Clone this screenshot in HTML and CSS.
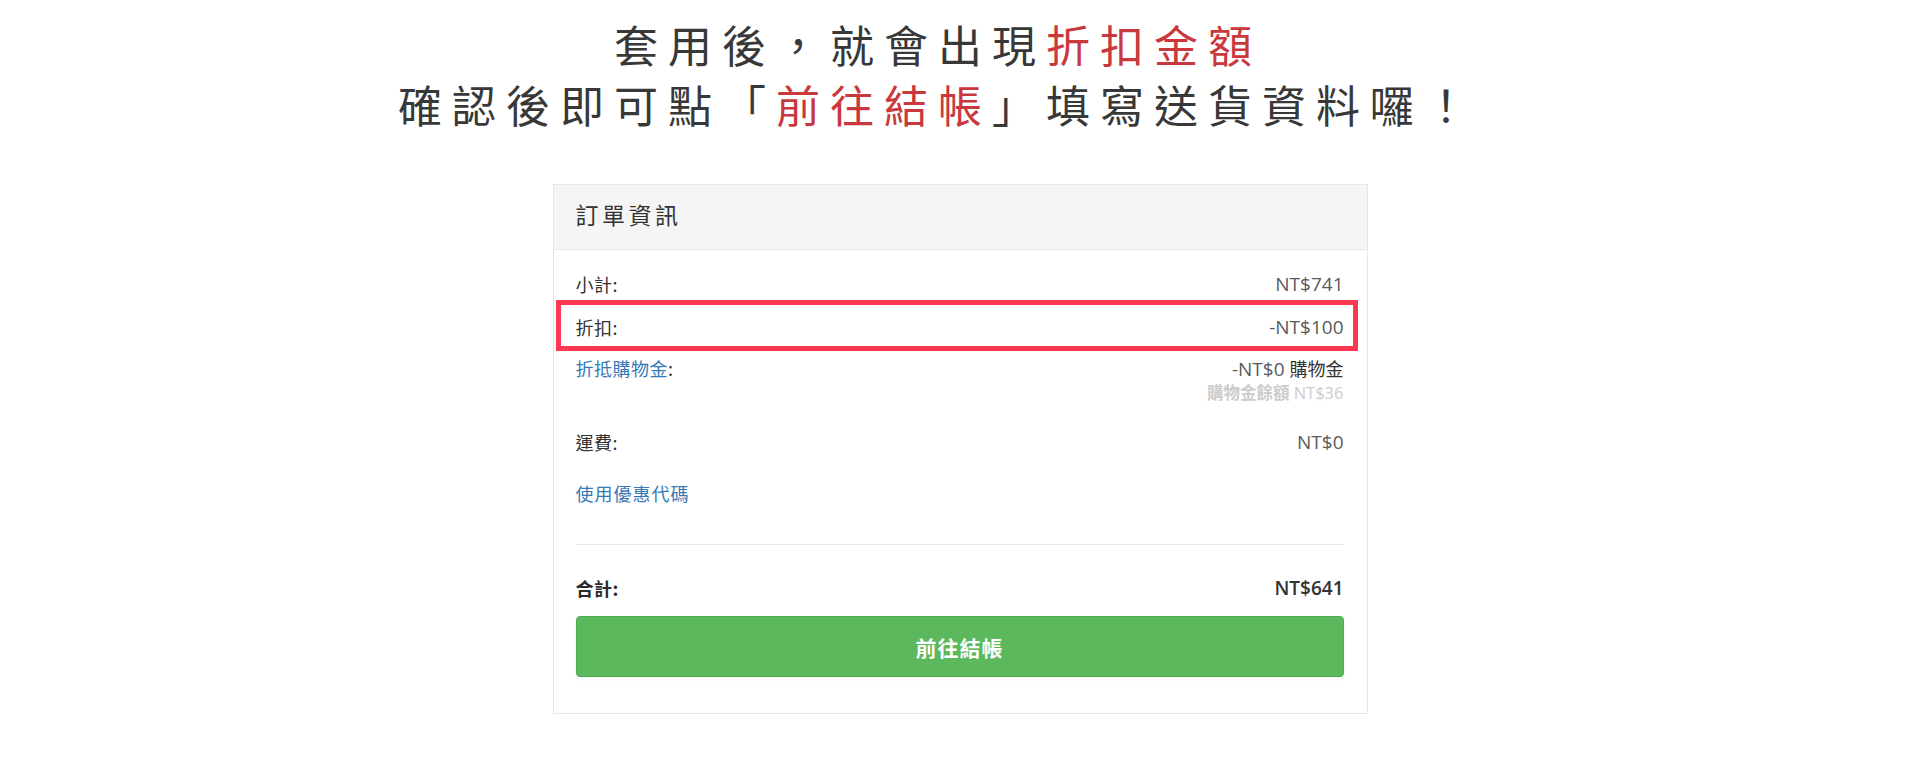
FILE: index.html
```html
<!DOCTYPE html>
<html lang="zh-Hant">
<head>
<meta charset="utf-8">
<title>訂單資訊</title>
<link rel="stylesheet" href="styles.css">
</head>
<body>
<div class="page">
  <div class="headline">
    <p class="headline-line">套用後，就會出現<span class="hl">折扣金額</span></p>
    <p class="headline-line">確認後即可點「<span class="hl">前往結帳</span>」填寫送貨資料囉！</p>
  </div>

  <div class="card">
    <div class="card-head">訂單資訊</div>
    <div class="card-body">
      <div class="row">
        <span class="label">小計:</span>
        <span class="val">NT$741</span>
      </div>
      <div class="row row-marked">
        <span class="label">折扣:</span>
        <span class="val">-NT$100</span>
        <span class="mark"></span>
      </div>
      <div class="row row-credit">
        <span class="label"><span class="link">折抵購物金</span>:</span>
        <div class="val-stack">
          <span class="val">-NT$0 <span class="cjk-dark">購物金</span></span>
          <span class="sub"><span class="sub-cjk">購物金餘額</span> NT$36</span>
        </div>
      </div>
      <div class="row">
        <span class="label">運費:</span>
        <span class="val">NT$0</span>
      </div>
      <div class="coupon"><span class="link">使用優惠代碼</span></div>
      <div class="divider"></div>
      <div class="row row-total">
        <span class="label">合計:</span>
        <span class="val">NT$641</span>
      </div>
      <button class="checkout" type="button">前往結帳</button>
    </div>
  </div>
</div>
</body>
</html>
```

FILE: styles.css
```css
html, body {
  margin: 0;
  padding: 0;
  background: #ffffff;
}

body {
  font-family: "Noto Sans CJK TC", "Noto Sans", sans-serif;
  color: #333333;
}

.page {
  width: 1920px;
  height: 776px;
  overflow: hidden;
}

.headline {
  padding: 14px 44px 0 0;
  text-align: center;
}

.headline-line {
  margin: 0;
  font-size: 44px;
  line-height: 60px;
  letter-spacing: 10px;
  color: #383838;
  font-weight: 400;
}

.hl {
  color: #c9383c;
}

.card {
  width: 813px;
  margin: 50px auto 0;
  border: 1px solid #e6e6e6;
  background: #ffffff;
}

.card-head {
  height: 65px;
  box-sizing: border-box;
  background: #f5f5f5;
  border-bottom: 1px solid #e8e8e8;
  display: flex;
  align-items: center;
  padding: 0 22px 6px 22px;
  font-size: 23px;
  letter-spacing: 3.5px;
  color: #333333;
}

.card-body {
  padding: 22px 23px 36px 22px;
}

.row {
  display: flex;
  justify-content: space-between;
  align-items: flex-start;
  line-height: 24px;
  margin-bottom: 19px;
}

.label {
  font-size: 18px;
  letter-spacing: 0.5px;
  color: #333333;
}

.val {
  font-family: "Open Sans", "Noto Sans CJK TC", sans-serif;
  font-size: 19px;
  color: #5a5a5a;
}

.link {
  color: #3679b5;
}

.row-marked {
  position: relative;
  margin-bottom: 17px;
}

.mark {
  position: absolute;
  left: -20px;
  right: -14px;
  top: -15px;
  bottom: -12px;
  border: 5px solid #fd3850;
  pointer-events: none;
}

.row-credit {
  margin-bottom: 26px;
}

.val-stack {
  display: flex;
  flex-direction: column;
  align-items: flex-end;
}

.cjk-dark {
  font-family: "Noto Sans CJK TC", sans-serif;
  font-size: 18px;
  color: #333333;
  font-weight: 400;
}

.sub {
  font-family: "Open Sans", "Noto Sans CJK TC", sans-serif;
  font-size: 16.5px;
  line-height: 22px;
  color: #cccccc;
}

.sub-cjk {
  font-family: "Noto Sans CJK TC", sans-serif;
  font-weight: 700;
}

.coupon {
  font-size: 18px;
  letter-spacing: 1px;
  line-height: 24px;
  margin-top: 27px;
}

.divider {
  height: 1px;
  background: #eaeaea;
  margin-top: 39px;
}

.row-total {
  margin-top: 31px;
  margin-bottom: 16px;
}

.row-total .label {
  font-weight: 700;
  color: #2a2a2a;
}

.row-total .val {
  font-weight: 600;
  color: #333333;
}

.checkout {
  display: block;
  width: 100%;
  height: 61px;
  border: 1px solid #4fae50;
  border-radius: 4px;
  background: #5cb85c;
  color: #ffffff;
  font-family: "Noto Sans CJK TC", sans-serif;
  font-size: 21px;
  font-weight: 700;
  letter-spacing: 1px;
  box-shadow: 0 2px 4px rgba(0, 0, 0, 0.04);
  cursor: pointer;
}
```
